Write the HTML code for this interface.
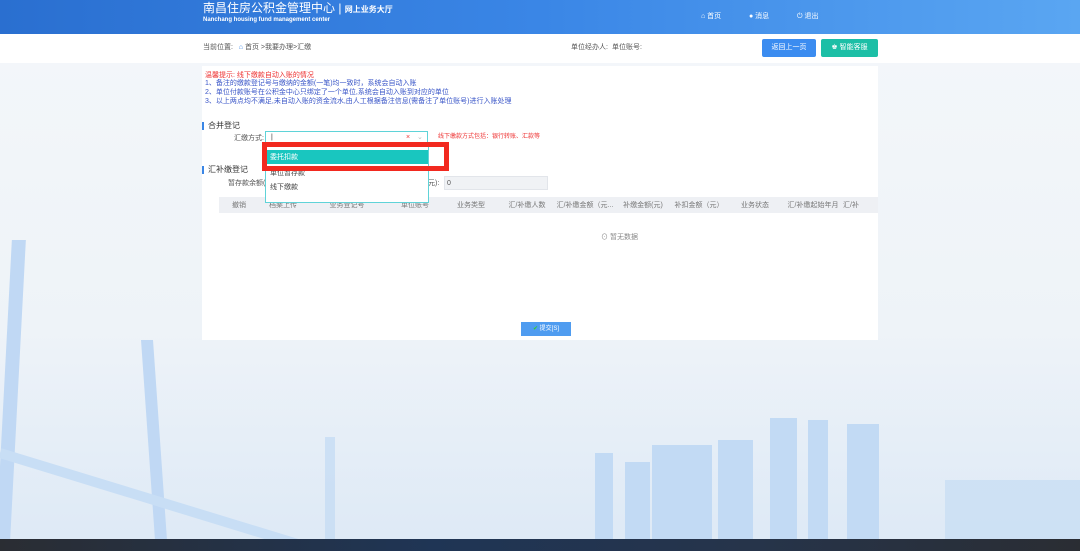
<!DOCTYPE html>
<html><head><meta charset="utf-8"><style>
*{margin:0;padding:0;box-sizing:border-box}
body{width:1080px;height:551px;overflow:hidden;position:relative;font-family:"Liberation Sans","Noto Sans CJK SC",sans-serif;background:linear-gradient(#f4f7fa 0%,#eef3f8 60%,#dde9f6 100%);}
.abs{position:absolute}
.hdr{left:0;top:0;width:1080px;height:34px;background:linear-gradient(90deg,#2a6fd0 0%,#3a86e6 50%,#5aa6f2 100%)}
.t{white-space:nowrap;font-size:7px;color:#555;line-height:1}
.bld{background:#c2daf4}
</style></head><body>
<div class="abs hdr"></div>
<div class="abs t" style="left:203px;top:2px;font-size:12px;color:#fff">南昌住房公积金管理中心 | <span style="font-size:8px;font-weight:bold">网上业务大厅</span></div>
<div class="abs t" style="left:203px;top:17px;font-size:6px;color:#fff;font-weight:bold">Nanchang housing fund management center</div>
<div class="abs t" style="left:701px;top:13px;color:#fff">⌂ 首页</div>
<div class="abs t" style="left:749px;top:13px;color:#fff">● 消息</div>
<div class="abs t" style="left:797px;top:13px;color:#fff">⏻ 退出</div>
<div class="abs" style="left:0;top:34px;width:1080px;height:29px;background:#fff"></div>
<div class="abs t" style="left:203px;top:44px">当前位置: &nbsp; <span style="color:#3a86e6">⌂</span> 首页 &gt;我要办理&gt;汇缴</div>
<div class="abs t" style="left:571px;top:44px">单位经办人:</div>
<div class="abs t" style="left:612px;top:44px">单位账号:</div>
<div class="abs t" style="left:762px;top:39px;width:54px;height:18px;background:#3b8cf0;color:#fff;border-radius:2px;line-height:18px;text-align:center">返回上一页</div>
<div class="abs t" style="left:821px;top:39px;width:57px;height:18px;background:#1cbfa6;color:#fff;border-radius:2px;line-height:18px;text-align:center">♚ 智能客服</div>
<!-- background city -->
<div class="abs" style="left:4px;top:240px;width:14px;height:300px;background:#c0d8f4;transform:skewX(-3deg)"></div>
<div class="abs" style="left:148px;top:340px;width:12px;height:200px;background:#c0d8f4;transform:skewX(4deg)"></div>
<div class="abs" style="left:0;top:448px;width:310px;height:10px;background:#c8def5;transform:rotate(17deg);transform-origin:left"></div>
<div class="abs bld" style="left:325px;top:437px;width:10px;height:102px;opacity:.7"></div>
<div class="abs bld" style="left:595px;top:453px;width:18px;height:86px"></div>
<div class="abs bld" style="left:625px;top:462px;width:25px;height:77px"></div>
<div class="abs bld" style="left:652px;top:445px;width:60px;height:94px"></div>
<div class="abs bld" style="left:718px;top:440px;width:35px;height:99px"></div>
<div class="abs bld" style="left:770px;top:418px;width:27px;height:121px"></div>
<div class="abs bld" style="left:808px;top:420px;width:20px;height:119px"></div>
<div class="abs bld" style="left:847px;top:424px;width:32px;height:115px"></div>
<div class="abs bld" style="left:945px;top:480px;width:135px;height:59px;opacity:.6"></div>
<div class="abs" style="left:0;top:539px;width:1080px;height:12px;background:linear-gradient(90deg,#2a2d33,#1f3555 40%,#26344a 70%,#2a2d33)"></div>
<!-- panel -->
<div class="abs" style="left:202px;top:66px;width:676px;height:274px;background:#fff"></div>
<div class="abs t" style="left:205px;top:72px;color:#e33">温馨提示: 线下缴款自动入账的情况</div>
<div class="abs t" style="left:205px;top:80px;color:#3a56c8">1、备注的缴款登记号与缴纳的金额(一笔)均一致时，系统会自动入账</div>
<div class="abs t" style="left:205px;top:89px;color:#3a56c8">2、单位付款账号在公积金中心只绑定了一个单位,系统会自动入账到对应的单位</div>
<div class="abs t" style="left:205px;top:98px;color:#3a56c8">3、以上两点均不满足,未自动入账的资金流水,由人工根据备注信息(需备注了单位账号)进行入账处理</div>
<div class="abs" style="left:202px;top:122px;width:2px;height:8px;background:#3a86e6"></div>
<div class="abs t" style="left:208px;top:122px;font-size:8px;color:#333">合并登记</div>
<div class="abs t" style="left:234px;top:135px">汇缴方式:</div>
<div class="abs" style="left:265px;top:131px;width:163px;height:15px;border:1px solid #5fd3d8;background:#fff"></div>
<div class="abs t" style="left:271px;top:134px;color:#333">|</div>
<div class="abs t" style="left:406px;top:134px;color:#e33">×</div>
<div class="abs t" style="left:417px;top:134px;color:#bbb">⌄</div>
<div class="abs t" style="left:438px;top:134px;color:#e33;font-size:6px">线下缴款方式包括：银行转账、汇款等</div>
<div class="abs" style="left:202px;top:166px;width:2px;height:8px;background:#3a86e6"></div>
<div class="abs t" style="left:208px;top:166px;font-size:8px;color:#333">汇补缴登记</div>
<div class="abs t" style="left:228px;top:180px">暂存款余额(</div>
<div class="abs t" style="left:428px;top:180px">元):</div>
<div class="abs" style="left:444px;top:176px;width:104px;height:14px;background:#f0f2f5;border:1px solid #e2e5ea"></div>
<div class="abs t" style="left:447px;top:180px">0</div>
<div class="abs" style="left:219px;top:197px;width:659px;height:16px;background:#eef0f4"></div>
<div class="abs t" style="left:219px;top:202px;width:659px;color:#777;display:flex">
<span style="width:40px;text-align:center">撤销</span><span style="width:48px;text-align:center">档案上传</span><span style="width:80px;text-align:center">业务登记号</span><span style="width:56px;text-align:center">单位账号</span><span style="width:56px;text-align:center">业务类型</span><span style="width:56px;text-align:center">汇/补缴人数</span><span style="width:60px;text-align:center">汇/补缴金额（元...</span><span style="width:56px;text-align:center">补缴金额(元)</span><span style="width:56px;text-align:center">补扣金额（元）</span><span style="width:56px;text-align:center">业务状态</span><span style="width:60px;text-align:center">汇/补缴起始年月</span><span>汇/补</span></div>
<div class="abs t" style="left:601px;top:234px;color:#888">⊙ 暂无数据</div>
<div class="abs t" style="left:521px;top:322px;width:50px;height:14px;background:#4f9cf0;color:#fff;line-height:14px;text-align:center;font-size:6px"><span style="color:#3c3">✔</span> 提交[S]</div>
<!-- dropdown -->
<div class="abs" style="left:265px;top:146px;width:164px;height:57px;background:#fff;border:1px solid #5fd3d8"></div>
<div class="abs" style="left:266px;top:150px;width:162px;height:14px;background:#19c6bf"></div>
<div class="abs t" style="left:270px;top:154px;color:#fff">委托扣款</div>
<div class="abs t" style="left:270px;top:170px;color:#444">单位暂存款</div>
<div class="abs t" style="left:270px;top:184px;color:#444">线下缴款</div>
<div class="abs" style="left:262px;top:142px;width:187px;height:29px;border:5px solid #f2291f"></div>
</body></html>
